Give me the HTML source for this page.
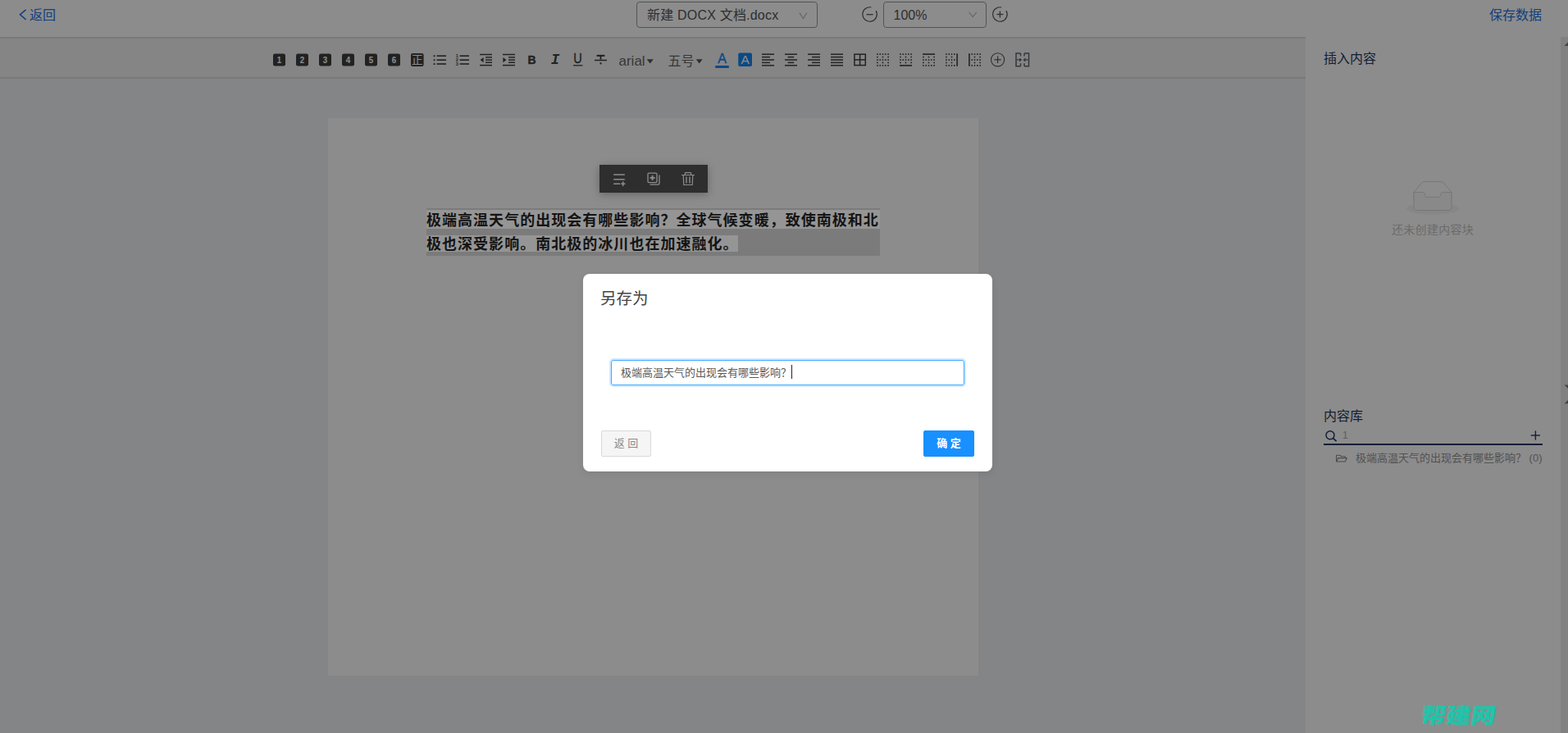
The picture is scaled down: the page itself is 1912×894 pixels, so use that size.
<!DOCTYPE html>
<html lang="zh-CN">
<head>
<meta charset="utf-8">
<title>文档编辑</title>
<style>
*{box-sizing:border-box;margin:0;padding:0}
html,body{width:1912px;height:894px;overflow:hidden;background:#f0f2f5}
body{font-family:"Liberation Sans","Noto Sans CJK SC",sans-serif;font-size:14px;color:#333;position:relative}
.abs{position:absolute}
#app{position:absolute;left:0;top:0;width:1912px;height:894px;overflow:hidden;background:#f0f2f5}
/* header */
#header{left:0;top:0;width:1912px;height:47px;background:#fff}
#hline{left:0;top:45px;width:1592px;height:2px;background:#dcdcdc}
.link{color:#2273e6;font-size:16px;line-height:20px;white-space:nowrap}
#back{left:36px;top:9px}
#save{left:1816px;top:9px}
.sel{height:32px;border:1px solid #9a9a9a;border-radius:4px;background:#fff;font-size:16px;line-height:32px;color:#555;white-space:nowrap}
#fsel{left:776px;top:2px;width:221px;padding-left:12px;letter-spacing:.2px}
#zsel{left:1077px;top:2px;width:126px;padding-left:11.5px}
/* toolbar */
#toolbar{left:0;top:47px;width:1592px;height:48px;background:#f3f3f3}
#tline{left:0;top:94px;width:1592px;height:2px;background:#dcdcdc}
.ti{position:absolute;top:64px;width:18px;height:18px;overflow:visible}
.tt{position:absolute;font-size:16px;line-height:20px;color:#666;white-space:nowrap}
/* page */
#page{left:400px;top:144px;width:793px;height:680px;background:#fff}
#block{left:520px;top:254px;width:553px;height:58px;background:#7b7b7b}
#block i{position:absolute;left:0;background:#959595}
#block p{position:absolute;left:0;font-size:18px;letter-spacing:1.03px;line-height:29px;font-weight:bold;color:#141414;white-space:nowrap}
#ftb{left:730.5px;top:201px;width:132px;height:34px;background:#555;box-shadow:0 2px 10px rgba(0,0,0,.28)}
/* right panel */
#panel{left:1592px;top:47px;width:311px;height:847px;background:#fff}
#sbar{left:1903px;top:45px;width:9px;height:849px;background:#ebebeb}
.ph{font-size:16px;line-height:20px;color:#1f3a5f;white-space:nowrap}
#empty{left:1697px;top:270px;font-size:14px;line-height:20px;color:#c4c4c4;white-space:nowrap;letter-spacing:.3px}
#sline{left:1614px;top:541px;width:267px;height:2px;background:#1f3a64}
#tree{left:1653px;top:549px;font-size:13px;line-height:20px;color:#969696;white-space:nowrap}
#wm{left:1731.5px;top:855px;font-size:26px;line-height:36px;font-weight:900;color:#20c4aa;white-space:nowrap;transform:scale(1.17,1) skewX(-8deg);transform-origin:0 70%}
/* mask + modal */
#mask{left:0;top:0;width:1912px;height:894px;background:rgba(0,0,0,.45)}
#modal{left:711px;top:334px;width:499px;height:241px;background:#fff;border-radius:8px;box-shadow:0 3px 8px rgba(0,0,0,.08)}
#mtitle{left:21px;top:15.6px;font-size:19.5px;line-height:28px;color:#444;white-space:nowrap}
#minput{left:34px;top:105px;width:431px;height:31px;border:1px solid #40a9ff;border-radius:3px;box-shadow:0 0 0 2px rgba(24,144,255,.2);font-size:13px;line-height:29px;padding-left:11px;color:#595959;white-space:nowrap}
#caret{left:254px;top:111px;width:1px;height:17px;background:#222}
.btn{height:32px;border-radius:2px;font-size:13px;line-height:30px;text-align:center;white-space:nowrap}
#bcancel{left:22px;top:191px;width:61px;border:1px solid #d9d9d9;background:#f5f5f5;color:#8a8a8a}
#bok{left:415px;top:191px;width:62px;border:1px solid #1890ff;background:#1890ff;color:#fff;font-weight:bold}
</style>
</head>
<body>
<div id="app">
  <div class="abs" id="header"></div>
  <div class="abs" id="hline"></div>
  <div class="abs link" id="back">返回</div>
  <div class="abs sel" id="fsel">新建 DOCX 文档.docx</div>
  <div class="abs sel" id="zsel">100%</div>
  <div class="abs link" id="save">保存数据</div>

  <div class="abs" id="toolbar"></div>
  <div class="abs" id="tline"></div>

  <div class="abs" id="page"></div>
  <div class="abs" id="ftb"></div>

  <div class="abs" id="panel"></div>
  <div class="abs" id="sbar"></div>
  <div class="abs ph" style="left:1614px;top:62px">插入内容</div>
  <div class="abs" id="empty">还未创建内容块</div>
  <div class="abs ph" style="left:1614px;top:498px">内容库</div>
  <div class="abs" id="sline"></div>
  <div class="abs" id="tree">极端高温天气的出现会有哪些影响？ (0)</div>
  <div class="abs tt" style="left:754.5px;top:64.5px;font-size:17px">arial</div>
  <div class="abs tt" style="left:814.5px;top:64.5px">五号</div>
  <div class="abs" style="left:1637px;top:521px;font-size:12px;line-height:20px;color:#aaa">1</div>
  <svg class="abs" id="ico" style="left:0;top:0" width="1912" height="894" viewBox="0 0 1912 894">
<rect x="333" y="65.5" width="15" height="15" rx="2.2" fill="#3e3e3e"/>
<text x="340.5" y="77.2" font-family="Liberation Sans, sans-serif" font-weight="bold" font-size="11.5" text-anchor="middle" fill="#fff" transform="translate(340.5 0) scale(0.85 1) translate(-340.5 0)">1</text>
<rect x="361" y="65.5" width="15" height="15" rx="2.2" fill="#3e3e3e"/>
<text x="368.5" y="77.2" font-family="Liberation Sans, sans-serif" font-weight="bold" font-size="11.5" text-anchor="middle" fill="#fff" transform="translate(368.5 0) scale(0.85 1) translate(-368.5 0)">2</text>
<rect x="389" y="65.5" width="15" height="15" rx="2.2" fill="#3e3e3e"/>
<text x="396.5" y="77.2" font-family="Liberation Sans, sans-serif" font-weight="bold" font-size="11.5" text-anchor="middle" fill="#fff" transform="translate(396.5 0) scale(0.85 1) translate(-396.5 0)">3</text>
<rect x="417" y="65.5" width="15" height="15" rx="2.2" fill="#3e3e3e"/>
<text x="424.5" y="77.2" font-family="Liberation Sans, sans-serif" font-weight="bold" font-size="11.5" text-anchor="middle" fill="#fff" transform="translate(424.5 0) scale(0.85 1) translate(-424.5 0)">4</text>
<rect x="445" y="65.5" width="15" height="15" rx="2.2" fill="#3e3e3e"/>
<text x="452.5" y="77.2" font-family="Liberation Sans, sans-serif" font-weight="bold" font-size="11.5" text-anchor="middle" fill="#fff" transform="translate(452.5 0) scale(0.85 1) translate(-452.5 0)">5</text>
<rect x="473" y="65.5" width="15" height="15" rx="2.2" fill="#3e3e3e"/>
<text x="480.5" y="77.2" font-family="Liberation Sans, sans-serif" font-weight="bold" font-size="11.5" text-anchor="middle" fill="#fff" transform="translate(480.5 0) scale(0.85 1) translate(-480.5 0)">6</text>
<rect x="501" y="65" width="15.6" height="16" rx="2.2" fill="#3e3e3e"/>
<text x="508.8" y="78.2" font-family="Noto Sans CJK SC, sans-serif" font-size="13.5" text-anchor="middle" fill="#fff">正</text>
<rect x="528.6" y="67.3" width="1.9" height="1.9" fill="#3e3e3e"/>
<line x1="532.6" y1="68.2" x2="544" y2="68.2" stroke="#3e3e3e" stroke-width="1.6" />
<rect x="528.6" y="72.3" width="1.9" height="1.9" fill="#3e3e3e"/>
<line x1="532.6" y1="73.2" x2="544" y2="73.2" stroke="#3e3e3e" stroke-width="1.6" />
<rect x="528.6" y="77.1" width="1.9" height="1.9" fill="#3e3e3e"/>
<line x1="532.6" y1="78.0" x2="544" y2="78.0" stroke="#3e3e3e" stroke-width="1.6" />
<text x="557.2" y="70.3" font-family="Liberation Sans, sans-serif" font-size="5.6" font-weight="bold" text-anchor="middle" fill="#3e3e3e">1</text>
<line x1="560.6" y1="68.2" x2="572" y2="68.2" stroke="#3e3e3e" stroke-width="1.6" />
<text x="557.2" y="75.3" font-family="Liberation Sans, sans-serif" font-size="5.6" font-weight="bold" text-anchor="middle" fill="#3e3e3e">2</text>
<line x1="560.6" y1="73.2" x2="572" y2="73.2" stroke="#3e3e3e" stroke-width="1.6" />
<text x="557.2" y="80.1" font-family="Liberation Sans, sans-serif" font-size="5.6" font-weight="bold" text-anchor="middle" fill="#3e3e3e">3</text>
<line x1="560.6" y1="78.0" x2="572" y2="78.0" stroke="#3e3e3e" stroke-width="1.6" />
<line x1="585" y1="66.5" x2="600" y2="66.5" stroke="#3e3e3e" stroke-width="1.5" />
<line x1="585" y1="79.6" x2="600" y2="79.6" stroke="#3e3e3e" stroke-width="1.5" />
<line x1="592" y1="69.9" x2="600" y2="69.9" stroke="#3e3e3e" stroke-width="1.5" />
<line x1="592" y1="73.05" x2="600" y2="73.05" stroke="#3e3e3e" stroke-width="1.5" />
<line x1="592" y1="76.2" x2="600" y2="76.2" stroke="#3e3e3e" stroke-width="1.5" />
<polygon points="589.6,70 589.6,76.2 585.6,73.1" fill="#3e3e3e"/>
<line x1="613" y1="66.5" x2="628" y2="66.5" stroke="#3e3e3e" stroke-width="1.5" />
<line x1="613" y1="79.6" x2="628" y2="79.6" stroke="#3e3e3e" stroke-width="1.5" />
<line x1="620" y1="69.9" x2="628" y2="69.9" stroke="#3e3e3e" stroke-width="1.5" />
<line x1="620" y1="73.05" x2="628" y2="73.05" stroke="#3e3e3e" stroke-width="1.5" />
<line x1="620" y1="76.2" x2="628" y2="76.2" stroke="#3e3e3e" stroke-width="1.5" />
<polygon points="613.4,70 613.4,76.2 617.4,73.1" fill="#3e3e3e"/>
<text x="648.6" y="77.8" font-family="Liberation Sans, sans-serif" font-weight="bold" font-size="15.4" text-anchor="middle" fill="#3e3e3e" stroke="#3e3e3e" stroke-width="0.5" transform="translate(648.6 0) scale(0.9 1) translate(-648.6 0)">B</text>
<text x="676.9" y="77.9" font-family="Liberation Mono, monospace" font-weight="bold" font-style="italic" font-size="17.5" text-anchor="middle" fill="#3e3e3e">I</text>
<text x="704.6" y="77.3" font-family="Liberation Sans, sans-serif" font-size="16.5" text-anchor="middle" fill="#3e3e3e" stroke="#3e3e3e" stroke-width="0.35" transform="translate(704.6 0) scale(0.88 1) translate(-704.6 0)">U</text>
<line x1="699" y1="79.8" x2="710.4" y2="79.8" stroke="#3e3e3e" stroke-width="1.3" />
<line x1="727.6" y1="67.9" x2="737.4" y2="67.9" stroke="#3e3e3e" stroke-width="2.1" />
<line x1="725" y1="73.5" x2="740" y2="73.5" stroke="#3e3e3e" stroke-width="1.5" />
<line x1="732.5" y1="67.7" x2="732.5" y2="72.6" stroke="#3e3e3e" stroke-width="1.9" />
<line x1="732.5" y1="76.2" x2="732.5" y2="78.4" stroke="#3e3e3e" stroke-width="1.9" />
<polygon points="788.7,72.2 796.8,72.2 792.75,77.6" fill="#555"/>
<polygon points="848.8,72.2 856.6,72.2 852.7,77.6" fill="#555"/>
<text x="880.5" y="76.8" font-family="Liberation Sans, sans-serif" font-size="16" text-anchor="middle" fill="#1685f0" stroke="#1685f0" stroke-width="0.35">A</text>
<rect x="872.2" y="80" width="16.6" height="3" fill="#1685f0"/>
<rect x="900.2" y="64.5" width="16.8" height="16.4" rx="2" fill="#1685f0"/>
<text x="908.6" y="78" font-family="Liberation Sans, sans-serif" font-size="15.5" text-anchor="middle" fill="#fff">A</text>
<line x1="929" y1="66.2" x2="944" y2="66.2" stroke="#3e3e3e" stroke-width="1.5" />
<line x1="929" y1="69.6" x2="939" y2="69.6" stroke="#3e3e3e" stroke-width="1.5" />
<line x1="929" y1="73.0" x2="944" y2="73.0" stroke="#3e3e3e" stroke-width="1.5" />
<line x1="929" y1="76.4" x2="939" y2="76.4" stroke="#3e3e3e" stroke-width="1.5" />
<line x1="929" y1="79.8" x2="944" y2="79.8" stroke="#3e3e3e" stroke-width="1.5" />
<line x1="957" y1="66.2" x2="972" y2="66.2" stroke="#3e3e3e" stroke-width="1.5" />
<line x1="960.6" y1="69.6" x2="968.2" y2="69.6" stroke="#3e3e3e" stroke-width="1.5" />
<line x1="957" y1="73.0" x2="972" y2="73.0" stroke="#3e3e3e" stroke-width="1.5" />
<line x1="960.6" y1="76.4" x2="968.2" y2="76.4" stroke="#3e3e3e" stroke-width="1.5" />
<line x1="957" y1="79.8" x2="972" y2="79.8" stroke="#3e3e3e" stroke-width="1.5" />
<line x1="985" y1="66.2" x2="1000" y2="66.2" stroke="#3e3e3e" stroke-width="1.5" />
<line x1="990" y1="69.6" x2="1000" y2="69.6" stroke="#3e3e3e" stroke-width="1.5" />
<line x1="985" y1="73.0" x2="1000" y2="73.0" stroke="#3e3e3e" stroke-width="1.5" />
<line x1="990" y1="76.4" x2="1000" y2="76.4" stroke="#3e3e3e" stroke-width="1.5" />
<line x1="985" y1="79.8" x2="1000" y2="79.8" stroke="#3e3e3e" stroke-width="1.5" />
<line x1="1013" y1="66.2" x2="1028" y2="66.2" stroke="#3e3e3e" stroke-width="1.5" />
<line x1="1013" y1="69.6" x2="1028" y2="69.6" stroke="#3e3e3e" stroke-width="1.5" />
<line x1="1013" y1="73.0" x2="1028" y2="73.0" stroke="#3e3e3e" stroke-width="1.5" />
<line x1="1013" y1="76.4" x2="1028" y2="76.4" stroke="#3e3e3e" stroke-width="1.5" />
<line x1="1013" y1="79.8" x2="1028" y2="79.8" stroke="#3e3e3e" stroke-width="1.5" />
<rect x="1041.9" y="66.2" width="13.4" height="13.4" fill="none" stroke="#3e3e3e" stroke-width="1.5"/>
<line x1="1048.6" y1="66.2" x2="1048.6" y2="79.6" stroke="#3e3e3e" stroke-width="1.5" />
<line x1="1041.9" y1="72.9" x2="1055.3" y2="72.9" stroke="#3e3e3e" stroke-width="1.5" />
<rect x="1069.10" y="65.30" width="1.6" height="1.6" fill="#3e3e3e"/>
<rect x="1072.40" y="65.30" width="1.6" height="1.6" fill="#3e3e3e"/>
<rect x="1075.70" y="65.30" width="1.6" height="1.6" fill="#3e3e3e"/>
<rect x="1079.00" y="65.30" width="1.6" height="1.6" fill="#3e3e3e"/>
<rect x="1082.30" y="65.30" width="1.6" height="1.6" fill="#3e3e3e"/>
<rect x="1069.10" y="68.75" width="1.6" height="1.6" fill="#3e3e3e"/>
<rect x="1075.70" y="68.75" width="1.6" height="1.6" fill="#3e3e3e"/>
<rect x="1082.30" y="68.75" width="1.6" height="1.6" fill="#3e3e3e"/>
<rect x="1069.10" y="72.20" width="1.6" height="1.6" fill="#3e3e3e"/>
<rect x="1072.40" y="72.20" width="1.6" height="1.6" fill="#3e3e3e"/>
<rect x="1075.70" y="72.20" width="1.6" height="1.6" fill="#3e3e3e"/>
<rect x="1079.00" y="72.20" width="1.6" height="1.6" fill="#3e3e3e"/>
<rect x="1082.30" y="72.20" width="1.6" height="1.6" fill="#3e3e3e"/>
<rect x="1069.10" y="75.65" width="1.6" height="1.6" fill="#3e3e3e"/>
<rect x="1075.70" y="75.65" width="1.6" height="1.6" fill="#3e3e3e"/>
<rect x="1082.30" y="75.65" width="1.6" height="1.6" fill="#3e3e3e"/>
<rect x="1069.10" y="79.10" width="1.6" height="1.6" fill="#3e3e3e"/>
<rect x="1072.40" y="79.10" width="1.6" height="1.6" fill="#3e3e3e"/>
<rect x="1075.70" y="79.10" width="1.6" height="1.6" fill="#3e3e3e"/>
<rect x="1079.00" y="79.10" width="1.6" height="1.6" fill="#3e3e3e"/>
<rect x="1082.30" y="79.10" width="1.6" height="1.6" fill="#3e3e3e"/>
<rect x="1097.10" y="65.30" width="1.6" height="1.6" fill="#3e3e3e"/>
<rect x="1100.40" y="65.30" width="1.6" height="1.6" fill="#3e3e3e"/>
<rect x="1103.70" y="65.30" width="1.6" height="1.6" fill="#3e3e3e"/>
<rect x="1107.00" y="65.30" width="1.6" height="1.6" fill="#3e3e3e"/>
<rect x="1110.30" y="65.30" width="1.6" height="1.6" fill="#3e3e3e"/>
<rect x="1097.10" y="68.75" width="1.6" height="1.6" fill="#3e3e3e"/>
<rect x="1103.70" y="68.75" width="1.6" height="1.6" fill="#3e3e3e"/>
<rect x="1110.30" y="68.75" width="1.6" height="1.6" fill="#3e3e3e"/>
<rect x="1097.10" y="72.20" width="1.6" height="1.6" fill="#3e3e3e"/>
<rect x="1100.40" y="72.20" width="1.6" height="1.6" fill="#3e3e3e"/>
<rect x="1103.70" y="72.20" width="1.6" height="1.6" fill="#3e3e3e"/>
<rect x="1107.00" y="72.20" width="1.6" height="1.6" fill="#3e3e3e"/>
<rect x="1110.30" y="72.20" width="1.6" height="1.6" fill="#3e3e3e"/>
<rect x="1097.10" y="75.65" width="1.6" height="1.6" fill="#3e3e3e"/>
<rect x="1103.70" y="75.65" width="1.6" height="1.6" fill="#3e3e3e"/>
<rect x="1110.30" y="75.65" width="1.6" height="1.6" fill="#3e3e3e"/>
<line x1="1097" y1="79.89999999999999" x2="1112" y2="79.89999999999999" stroke="#3e3e3e" stroke-width="1.6" />
<rect x="1125.10" y="68.75" width="1.6" height="1.6" fill="#3e3e3e"/>
<rect x="1131.70" y="68.75" width="1.6" height="1.6" fill="#3e3e3e"/>
<rect x="1138.30" y="68.75" width="1.6" height="1.6" fill="#3e3e3e"/>
<rect x="1125.10" y="72.20" width="1.6" height="1.6" fill="#3e3e3e"/>
<rect x="1128.40" y="72.20" width="1.6" height="1.6" fill="#3e3e3e"/>
<rect x="1131.70" y="72.20" width="1.6" height="1.6" fill="#3e3e3e"/>
<rect x="1135.00" y="72.20" width="1.6" height="1.6" fill="#3e3e3e"/>
<rect x="1138.30" y="72.20" width="1.6" height="1.6" fill="#3e3e3e"/>
<rect x="1125.10" y="75.65" width="1.6" height="1.6" fill="#3e3e3e"/>
<rect x="1131.70" y="75.65" width="1.6" height="1.6" fill="#3e3e3e"/>
<rect x="1138.30" y="75.65" width="1.6" height="1.6" fill="#3e3e3e"/>
<rect x="1125.10" y="79.10" width="1.6" height="1.6" fill="#3e3e3e"/>
<rect x="1128.40" y="79.10" width="1.6" height="1.6" fill="#3e3e3e"/>
<rect x="1131.70" y="79.10" width="1.6" height="1.6" fill="#3e3e3e"/>
<rect x="1135.00" y="79.10" width="1.6" height="1.6" fill="#3e3e3e"/>
<rect x="1138.30" y="79.10" width="1.6" height="1.6" fill="#3e3e3e"/>
<line x1="1125" y1="66.1" x2="1140" y2="66.1" stroke="#3e3e3e" stroke-width="1.6" />
<rect x="1153.10" y="65.30" width="1.6" height="1.6" fill="#3e3e3e"/>
<rect x="1156.40" y="65.30" width="1.6" height="1.6" fill="#3e3e3e"/>
<rect x="1159.70" y="65.30" width="1.6" height="1.6" fill="#3e3e3e"/>
<rect x="1163.00" y="65.30" width="1.6" height="1.6" fill="#3e3e3e"/>
<rect x="1153.10" y="68.75" width="1.6" height="1.6" fill="#3e3e3e"/>
<rect x="1159.70" y="68.75" width="1.6" height="1.6" fill="#3e3e3e"/>
<rect x="1153.10" y="72.20" width="1.6" height="1.6" fill="#3e3e3e"/>
<rect x="1156.40" y="72.20" width="1.6" height="1.6" fill="#3e3e3e"/>
<rect x="1159.70" y="72.20" width="1.6" height="1.6" fill="#3e3e3e"/>
<rect x="1163.00" y="72.20" width="1.6" height="1.6" fill="#3e3e3e"/>
<rect x="1153.10" y="75.65" width="1.6" height="1.6" fill="#3e3e3e"/>
<rect x="1159.70" y="75.65" width="1.6" height="1.6" fill="#3e3e3e"/>
<rect x="1153.10" y="79.10" width="1.6" height="1.6" fill="#3e3e3e"/>
<rect x="1156.40" y="79.10" width="1.6" height="1.6" fill="#3e3e3e"/>
<rect x="1159.70" y="79.10" width="1.6" height="1.6" fill="#3e3e3e"/>
<rect x="1163.00" y="79.10" width="1.6" height="1.6" fill="#3e3e3e"/>
<line x1="1167.1000000000001" y1="65.3" x2="1167.1000000000001" y2="80.7" stroke="#3e3e3e" stroke-width="1.6" />
<rect x="1184.40" y="65.30" width="1.6" height="1.6" fill="#3e3e3e"/>
<rect x="1187.70" y="65.30" width="1.6" height="1.6" fill="#3e3e3e"/>
<rect x="1191.00" y="65.30" width="1.6" height="1.6" fill="#3e3e3e"/>
<rect x="1194.30" y="65.30" width="1.6" height="1.6" fill="#3e3e3e"/>
<rect x="1187.70" y="68.75" width="1.6" height="1.6" fill="#3e3e3e"/>
<rect x="1194.30" y="68.75" width="1.6" height="1.6" fill="#3e3e3e"/>
<rect x="1184.40" y="72.20" width="1.6" height="1.6" fill="#3e3e3e"/>
<rect x="1187.70" y="72.20" width="1.6" height="1.6" fill="#3e3e3e"/>
<rect x="1191.00" y="72.20" width="1.6" height="1.6" fill="#3e3e3e"/>
<rect x="1194.30" y="72.20" width="1.6" height="1.6" fill="#3e3e3e"/>
<rect x="1187.70" y="75.65" width="1.6" height="1.6" fill="#3e3e3e"/>
<rect x="1194.30" y="75.65" width="1.6" height="1.6" fill="#3e3e3e"/>
<rect x="1184.40" y="79.10" width="1.6" height="1.6" fill="#3e3e3e"/>
<rect x="1187.70" y="79.10" width="1.6" height="1.6" fill="#3e3e3e"/>
<rect x="1191.00" y="79.10" width="1.6" height="1.6" fill="#3e3e3e"/>
<rect x="1194.30" y="79.10" width="1.6" height="1.6" fill="#3e3e3e"/>
<line x1="1181.9" y1="65.3" x2="1181.9" y2="80.7" stroke="#3e3e3e" stroke-width="1.6" />
<circle cx="1216.6" cy="72.8" r="8.1" fill="none" stroke="#555" stroke-width="1.1"/>
<line x1="1212.4" y1="72.8" x2="1220.8" y2="72.8" stroke="#555" stroke-width="1.2" />
<line x1="1216.6" y1="68.6" x2="1216.6" y2="77" stroke="#555" stroke-width="1.2" />
<path d="M1244.5 65 H1239 V80.8 H1244.5 M1249 65 H1254.5 V80.8 H1249 M1244.5 65 V68.5 M1244.5 77.3 V80.8 M1249 65 V68.5 M1249 77.3 V80.8" fill="none" stroke="#5a6670" stroke-width="1.5"/>
<path d="M1239.8 72.9 H1244.5 M1253.7 72.9 H1249" fill="none" stroke="#5a6670" stroke-width="1.4"/>
<polygon points="1243,70.4 1246.2,72.9 1243,75.4" fill="#5a6670"/><polygon points="1250.5,70.4 1247.3,72.9 1250.5,75.4" fill="#5a6670"/>
<path d="M1068.13 13.15 A8.7 8.7 0 1 1 1062.41 8.99" fill="none" stroke="#555" stroke-width="1.2"/>
<line x1="1056.6" y1="17.7" x2="1064.6" y2="17.7" stroke="#555" stroke-width="1.3" />
<path d="M1226.93 13.15 A8.7 8.7 0 1 1 1221.21 8.99" fill="none" stroke="#555" stroke-width="1.2"/>
<line x1="1215.4" y1="17.5" x2="1223.4" y2="17.5" stroke="#555" stroke-width="1.3" />
<line x1="1219.4" y1="13.5" x2="1219.4" y2="21.5" stroke="#555" stroke-width="1.3" />
<path d="M975 15.6 L979.4 22.6 L983.8 15.6" fill="none" stroke="#bbb" stroke-width="1.2"/>
<path d="M1181.6 14.8 L1186.2 20.6 L1190.8 14.8" fill="none" stroke="#bbb" stroke-width="1.2"/>
<path d="M31.6 11.8 L24.4 17.8 L31.6 23.8" fill="none" stroke="#2273e6" stroke-width="1.5"/>
<line x1="748.2" y1="213" x2="761.8" y2="213" stroke="#fff" stroke-width="1.5" />
<line x1="748.2" y1="218.8" x2="761.8" y2="218.8" stroke="#fff" stroke-width="1.5" />
<line x1="748.2" y1="224.2" x2="756" y2="224.2" stroke="#fff" stroke-width="1.5" />
<line x1="757" y1="224.2" x2="762.4" y2="224.2" stroke="#fff" stroke-width="1.5" />
<line x1="759.7" y1="221.4" x2="759.7" y2="227" stroke="#fff" stroke-width="1.5" />
<rect x="790" y="211.2" width="11" height="11.4" rx="1.3" fill="none" stroke="#fff" stroke-width="1.3"/>
<path d="M792.6 225.2 H802.4 Q804 225.2 804 223.6 V213.6" fill="none" stroke="#fff" stroke-width="1.3"/>
<line x1="792.6" y1="216.9" x2="798.6" y2="216.9" stroke="#fff" stroke-width="1.9" />
<line x1="795.6" y1="213.9" x2="795.6" y2="219.9" stroke="#fff" stroke-width="1.9" />
<path d="M831 213.5 H847 M835.4 213.2 V211.2 Q835.4 210.6 836 210.6 H842 Q842.6 210.6 842.6 211.2 V213.2 M833.2 213.8 L833.8 225.5 H844.2 L844.8 213.8" fill="none" stroke="#fff" stroke-width="1.2"/>
<path d="M837 215.4 V223.4 M841 215.4 V223.4" fill="none" stroke="#fff" stroke-width="1.4"/>
<g transform="translate(1715 220.5)"><g transform="translate(0 1)" fill="none" fill-rule="evenodd"><ellipse fill="#F5F5F5" cx="32" cy="33" rx="32" ry="7"/><g fill-rule="nonzero" stroke="#D9D9D9"><path d="M55 12.76L44.854 1.258C44.367.474 43.656 0 42.907 0H21.093c-.749 0-1.46.474-1.947 1.257L9 12.761V22h46v-9.24z"/><path d="M41.613 15.931c0-1.605.994-2.93 2.227-2.931H55v18.137C55 33.26 53.68 35 52.05 35h-40.1C10.32 35 9 33.259 9 31.137V13h11.16c1.233 0 2.227 1.323 2.227 2.928v.022c0 1.605 1.005 2.901 2.237 2.901h14.752c1.232 0 2.237-1.308 2.237-2.913v-.007z" fill="#FAFAFA"/></g></g></g>
<circle cx="1622" cy="530.8" r="5" fill="none" stroke="#1f3a64" stroke-width="1.5"/>
<line x1="1625.6" y1="534.6" x2="1629.6" y2="538.2" stroke="#1f3a64" stroke-width="1.7" />
<line x1="1866.8" y1="531" x2="1878" y2="531" stroke="#1f3a64" stroke-width="1.4" />
<line x1="1872.4" y1="525.4" x2="1872.4" y2="536.6" stroke="#1f3a64" stroke-width="1.4" />
<path d="M1629.6 563 V555.2 H1634 L1635.4 556.8 H1640.4 V558.4 M1629.6 563 L1631.8 558.6 H1642.4 L1640.4 563 Z" fill="none" stroke="#8a8a8a" stroke-width="1.1" stroke-linejoin="round"/>
<polygon points="1907.6,56 1912,51.6 1912,56" fill="#777"/>
<polygon points="1907.6,469.5 1912,469.5 1912,473.7" fill="#777"/>
<polygon points="1907.6,492.3 1912,488 1912,492.3" fill="#777"/>
</svg>

  <div class="abs" id="mask"></div>
  <div class="abs" id="block"><i style="top:2px;width:553px;height:23px"></i><i style="top:33px;width:380px;height:20px"></i><p style="top:1px">极端高温天气的出现会有哪些影响？全球气候变暖，致使南极和北</p><p style="top:30px">极也深受影响。南北极的冰川也在加速融化。</p></div>
  <div class="abs" id="wm">帮建网</div>
  <div class="abs" id="modal">
    <div class="abs" id="mtitle">另存为</div>
    <div class="abs" id="minput">极端高温天气的出现会有哪些影响？</div>
    <div class="abs" id="caret"></div>
    <div class="abs btn" id="bcancel">返 回</div>
    <div class="abs btn" id="bok">确 定</div>
  </div>
</div>
</body>
</html>
